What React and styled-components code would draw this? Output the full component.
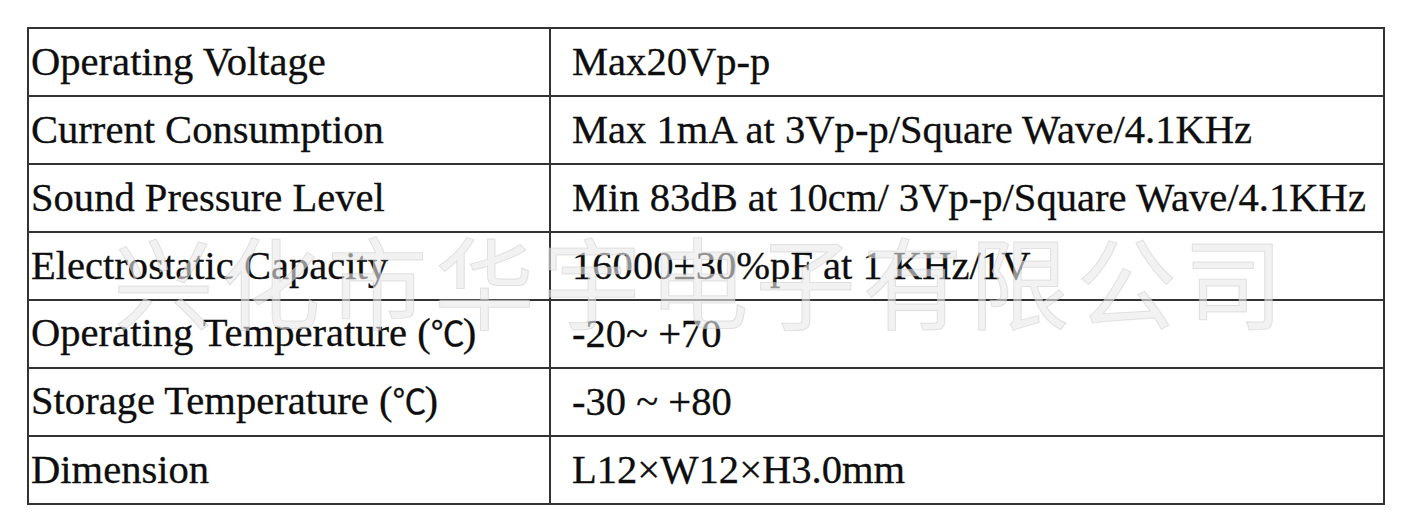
import React from "react";
import styled, { createGlobalStyle } from "styled-components";

const GlobalStyle = createGlobalStyle`
  html, body {
    margin: 0;
    padding: 0;
    background: #ffffff;
  }
`;

const Page = styled.div`
  position: relative;
  width: 1404px;
  height: 523px;
  padding: 27px 0 0 27px;
  box-sizing: border-box;
  overflow: hidden;
`;

const SpecTable = styled.table`
  border-collapse: collapse;
  width: 1358px;
  font-family: "Liberation Serif", "Times New Roman", "Noto Sans CJK SC", serif;
  font-size: 40.6px;
  color: #0e0e0e;
`;

const Row = styled.tr`
  height: 68px;
`;

const Cell = styled.td`
  border: 2px solid #333333;
  padding: 0 0 0 ${(p) => (p.$value ? "21px" : "2px")};
  width: ${(p) => (p.$value ? "auto" : "518px")};
  white-space: nowrap;
  vertical-align: middle;
  line-height: 46px;
  -webkit-text-stroke: 0.3px #0e0e0e;
`;

const Degree = styled.span`
  font-size: 34px;
  letter-spacing: -2px;
`;

const Watermark = styled.div`
  position: absolute;
  left: 0;
  right: 0;
  top: 224px;
  text-align: center;
  font-family: "Noto Sans CJK SC", sans-serif;
  font-size: 100px;
  line-height: 110px;
  letter-spacing: 7px;
  color: rgba(234, 234, 234, 0.6);
  -webkit-text-stroke: 1px rgba(190, 190, 190, 0.4);
  pointer-events: none;
`;

const specs = [
  ["Operating Voltage", "Max20Vp-p"],
  ["Current Consumption", "Max 1mA at 3Vp-p/Square Wave/4.1KHz"],
  ["Sound Pressure Level", "Min 83dB at 10cm/ 3Vp-p/Square Wave/4.1KHz"],
  ["Electrostatic Capacity", "16000±30%pF at 1 KHz/1V"],
  [
    <>
      Operating Temperature (<Degree>℃</Degree>)
    </>,
    "-20~ +70",
  ],
  [
    <>
      Storage Temperature (<Degree>℃</Degree>)
    </>,
    "-30 ~ +80",
  ],
  ["Dimension", "L12×W12×H3.0mm"],
];

const App = () => {
  return (
    <>
      <GlobalStyle />
      <Page>
        <SpecTable>
          <tbody>
            {specs.map(([name, value]) => (
              <Row key={value}>
                <Cell>{name}</Cell>
                <Cell $value>{value}</Cell>
              </Row>
            ))}
          </tbody>
        </SpecTable>
        <Watermark>兴化市华宇电子有限公司</Watermark>
      </Page>
    </>
  );
};

export default App;
